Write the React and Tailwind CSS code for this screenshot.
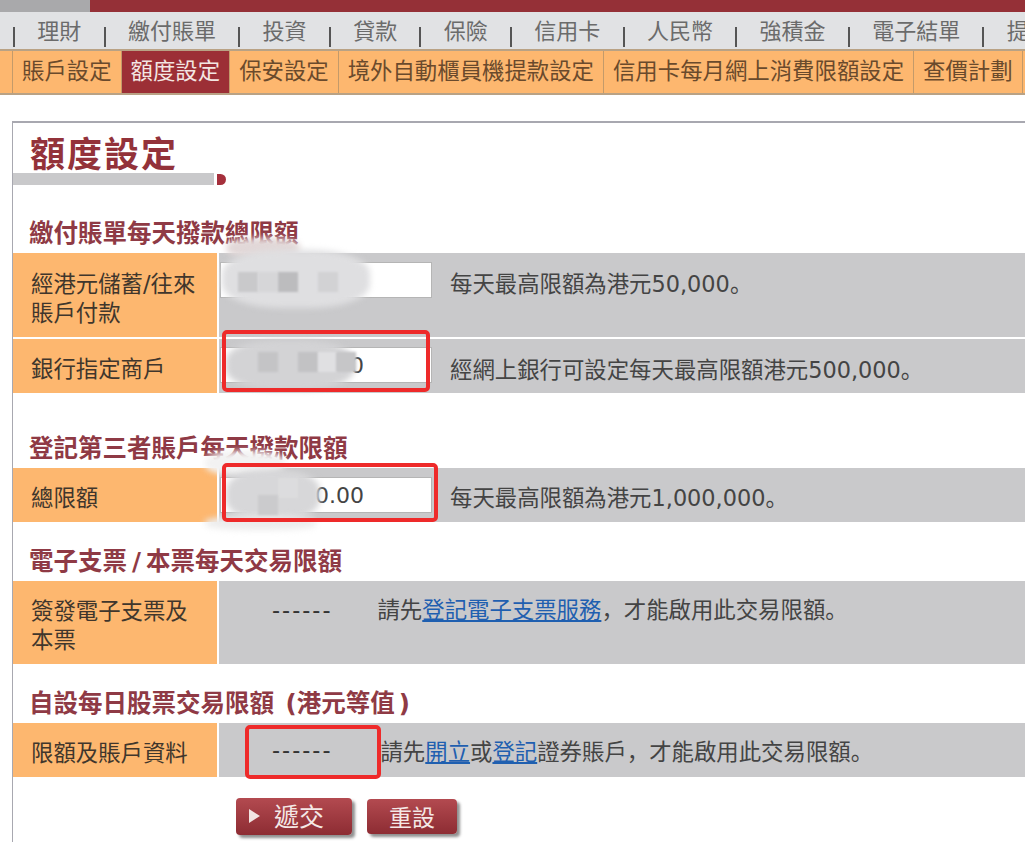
const navItems = ["理財", "繳付賬單", "投資", "貸款", "保險", "信用卡", "人民幣", "強積金", "電子結單", "提"];
const subItems = ["賬戶設定", "額度設定", "保安設定", "境外自動櫃員機提款設定", "信用卡每月網上消費限額設定", "查價計劃"];

function Heading({ children, className }) {
  return <h2 className={`pb-[4px] pl-[16px] text-[24.5px] leading-[30px] font-bold whitespace-nowrap text-[#8f3a45] ${className}`}>{children}</h2>;
}

function Punct({ children }) {
  return <span className="font-['Noto_Sans_CJK_SC']">{children}</span>;
}

function Row({ label, height, children }) {
  return (
    <div className={`flex ${height}`}>
      <div className="w-[204px] shrink-0 bg-[#fdb76f] pl-[18px] pr-2 pt-[7px] text-[22.4px] leading-[29px] text-[#40362c]">
        <span className="flex h-full items-center">{label}</span>
      </div>
      <div className="ml-[2px] flex min-w-0 flex-1 bg-[#c9c9cb] text-[22.4px] leading-[29px] text-[#444]">{children}</div>
    </div>
  );
}

function Input({ value, top }) {
  return (
    <div className={`ml-[1px] flex h-[36px] w-[212px] shrink-0 items-center justify-end border border-[#b5b5b5] bg-white pr-[67px] text-[22px] text-[#444] ${top}`}>
      {value}
    </div>
  );
}

function Blob({ className }) {
  return <div className={`absolute rounded-[40%] blur-[3px] ${className}`} />;
}

function Pixel({ className }) {
  return <div className={`absolute h-[20px] w-[20px] blur-[1px] ${className}`} />;
}

function RedBox({ className }) {
  return <div className={`absolute rounded-[5px] border-[4px] border-[#ee2a2a] ${className}`} />;
}

export default function App() {
  return (
    <div
      className="relative h-[842px] w-[1025px] overflow-hidden bg-white"
      style={{ fontFamily: '"DejaVu Sans", "Noto Sans CJK TC", sans-serif' }}
    >
      <div className="flex h-[12px]">
        <div className="w-[90px] bg-[#a9a9ab]" />
        <div className="flex-1 bg-[#953037]" />
      </div>

      <nav className="flex h-[37px] items-end overflow-hidden whitespace-nowrap bg-[#e1e2e4] pl-[13px] text-[22px] text-[#6b6b6b]">
        {navItems.map((item) => (
          <div key={item} className="flex shrink-0 items-end">
            <span className="mb-[2px] h-[20px] w-[2px] bg-[#555]" />
            <span className="px-[22.3px] leading-[34px]">{item}</span>
          </div>
        ))}
      </nav>

      <div className="flex h-[46px] items-stretch overflow-hidden whitespace-nowrap border-y-2 border-[#b9a285] bg-[#fdb76f] pl-[12px] text-[22.4px] text-[#6a4a2c]">
        {subItems.map((item, i) => (
          <div
            key={item}
            className={`flex shrink-0 items-center border-l border-[#c39a6a] px-[9px] ${i === 1 ? "bg-[#9c2f36] text-[#f3e6e2]" : ""}`}
          >
            {item}
          </div>
        ))}
        <div className="flex-1 border-l border-[#c39a6a]" />
      </div>

      <main className="ml-[12px] mt-[26px] h-[721px] border-l border-t-2 border-[#a8a8b0]">
        <h1 className="pl-[17px] pt-[14px] text-[35px] leading-[36px] font-bold tracking-[2px] text-[#93323a]">額度設定</h1>
        <div className="flex items-center">
          <div className="h-[12px] w-[201px] bg-[#c9c9cb]" />
          <div className="ml-[3px] h-[11px] w-[9px] rounded-r-full bg-[#a5303c]" />
        </div>

        <Heading className="mt-[34px]">繳付賬單每天撥款總限額</Heading>
        <Row label={<span>經港元儲蓄/往來<br />賬戶付款</span>} height="h-[84px]">
          <Input top="mt-[9px]" />
          <p className="ml-[18px] mt-[15px] whitespace-nowrap">每天最高限額為港元50,000<Punct>。</Punct></p>
        </Row>
        <div className="h-[2px] bg-white" />
        <Row label="銀行指定商戶" height="h-[54px]">
          <Input top="mt-[8px]" value="0" />
          <p className="ml-[18px] mt-[15px] whitespace-nowrap">經網上銀行可設定每天最高限額港元500,000<Punct>。</Punct></p>
        </Row>

        <Heading className="mt-[41px]">登記第三者賬戶每天撥款限額</Heading>
        <Row label="總限額" height="h-[54px]">
          <Input top="mt-[9px]" value="0.00" />
          <p className="ml-[18px] mt-[14px] whitespace-nowrap">每天最高限額為港元1,000,000<Punct>。</Punct></p>
        </Row>

        <Heading className="mt-[25px]">電子支票<span className="mx-[5px]">/</span>本票每天交易限額</Heading>
        <Row label={<span>簽發電子支票及<br />本票</span>} height="h-[83px]">
          <span className="ml-[53px] mt-[15px] tracking-[2px] text-[#333]">------</span>
          <p className="ml-[45px] mt-[13px] whitespace-nowrap">請先<a className="text-[#1f5fb0] underline">登記電子支票服務</a><Punct>，</Punct>才能啟用此交易限額<Punct>。</Punct></p>
        </Row>

        <Heading className="mt-[25px]">自設每日股票交易限額 <span className="ml-[3px]">(</span>港元等值<span className="ml-[4px]">)</span></Heading>
        <Row label="限額及賬戶資料" height="h-[54px]">
          <span className="ml-[53px] mt-[13px] tracking-[2px] text-[#333]">------</span>
          <p className="ml-[48px] mt-[13px] whitespace-nowrap">請先<a className="text-[#1f5fb0] underline">開立</a>或<a className="text-[#1f5fb0] underline">登記</a>證券賬戶<Punct>，</Punct>才能啟用此交易限額<Punct>。</Punct></p>
        </Row>

        <div className="ml-[223px] mt-[21px] flex items-center gap-[15px] text-[25px] text-[#f4e8e6]">
          <button className="flex h-[37px] w-[116px] items-center rounded-[4px] bg-gradient-to-b from-[#b34a50] to-[#8d2c33] pl-[11px] pt-[3px] shadow-[3px_3px_3px_#8f8f8f]">
            <svg width="15" height="16" viewBox="0 0 15 16" className="mb-[5px] mr-[12px]">
              <path d="M2 1 L13 8 L2 15 Z" fill="#f1e4e2" />
            </svg>
            遞交
          </button>
          <button className="flex h-[35px] w-[90px] items-center justify-center rounded-[4px] bg-gradient-to-b from-[#b34a50] to-[#8d2c33] pt-[3px] text-[23px] shadow-[3px_3px_3px_#8f8f8f]">
            重設
          </button>
        </div>
      </main>

      <Blob className="left-[226px] top-[238px] h-[20px] w-[74px] bg-[#e2d8d8]" />
      <Blob className="left-[222px] top-[250px] h-[58px] w-[148px] bg-[#dfdfe1]" />
      <Pixel className="left-[238px] top-[272px] bg-[#c9c9cb]" />
      <Pixel className="left-[258px] top-[272px] bg-[#d6d6d8]" />
      <Pixel className="left-[278px] top-[272px] bg-[#bcbcbe]" />
      <Pixel className="left-[318px] top-[272px] bg-[#d2d2d4]" />

      <Blob className="left-[226px] top-[340px] h-[50px] w-[128px] bg-[#d3d3d5]" />
      <Pixel className="left-[258px] top-[352px] bg-[#c4c4c6]" />
      <Pixel className="left-[298px] top-[352px] bg-[#c2c2c4]" />
      <Pixel className="left-[318px] top-[352px] bg-[#e0e0e2]" />
      <Pixel className="left-[336px] top-[352px] bg-[#c6c6c8]" />

      <Blob className="left-[205px] top-[451px] h-[24px] w-[80px] bg-[#f2f2f2]" />
      <Blob className="left-[226px] top-[470px] h-[50px] w-[94px] bg-[#d7d7d9]" />
      <Blob className="left-[205px] top-[516px] h-[14px] w-[112px] bg-[#ececec]" />
      <Pixel className="left-[278px] top-[478px] bg-[#dcdcde]" />
      <Pixel className="left-[258px] top-[495px] bg-[#cbcbcd]" />

      <RedBox className="left-[222px] top-[330px] h-[62px] w-[208px]" />
      <RedBox className="left-[222px] top-[463px] h-[59px] w-[216px]" />
      <RedBox className="left-[245px] top-[725px] h-[54px] w-[136px]" />
    </div>
  );
}
